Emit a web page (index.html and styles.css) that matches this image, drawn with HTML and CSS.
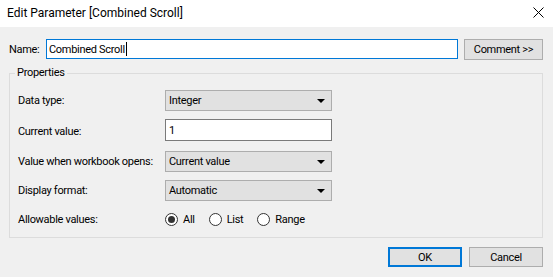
FILE: index.html
```html
<!DOCTYPE html>
<html>
<head>
<meta charset="utf-8">
<link rel="stylesheet" href="styles.css">
</head>
<body>
<div class="window">
  <div class="titlebar">
    <span class="title">Edit Parameter [Combined Scroll]</span>
    <svg class="close" width="11" height="11" viewBox="0 0 11 11"><path d="M0.5 0.5 L10.5 10.5 M10.5 0.5 L0.5 10.5" stroke="#000" stroke-width="1" fill="none"/></svg>
  </div>
  <div class="main">
    <div class="name-row">
      <span class="name-label">Name:</span>
      <div class="textbox focused">Combined Scroll<span class="caret"></span></div>
      <div class="btn comment">Comment &gt;&gt;</div>
    </div>
    <fieldset class="group">
      <legend>Properties</legend>
      <div class="props">
        <span class="lbl">Data type:</span>
        <div class="combo"><span>Integer</span><span class="arrow"></span></div>
        <span class="lbl">Current value:</span>
        <div class="textbox value">1</div>
        <span class="lbl">Value when workbook opens:</span>
        <div class="combo"><span>Current value</span><span class="arrow"></span></div>
        <span class="lbl">Display format:</span>
        <div class="combo"><span>Automatic</span><span class="arrow"></span></div>
        <span class="lbl">Allowable values:</span>
        <div class="radios">
          <label class="radio"><span class="dot checked"></span>All</label>
          <label class="radio"><span class="dot"></span>List</label>
          <label class="radio"><span class="dot"></span>Range</label>
        </div>
      </div>
    </fieldset>
    <div class="buttons">
      <div class="btn default">OK</div>
      <div class="btn">Cancel</div>
    </div>
  </div>
</div>
</body>
</html>
```
FILE: styles.css
```css
* { box-sizing: border-box; }
html, body { margin: 0; padding: 0; }
body {
  width: 553px;
  height: 277px;
  overflow: hidden;
  background: #f0f0f0;
  font-family: Roboto, "Liberation Sans", sans-serif;
  font-size: 11px;
  letter-spacing: -0.3px;
  color: #000;
}
.titlebar {
  height: 27px;
  background: #fff;
  display: flex;
  align-items: center;
  justify-content: space-between;
  padding: 0 9px 2px 7px;
}
.title { font-size: 12px; letter-spacing: 0; }
.close { display: block; }
.main {
  padding: 12px 10px 0 9px;
}
.name-row {
  display: flex;
  align-items: center;
  height: 21px;
}
.name-label { width: 37px; white-space: nowrap; }
.textbox {
  background: #fff;
  border: 1px solid #7a7a7a;
  height: 20px;
  display: flex;
  align-items: center;
  padding-left: 2px;
}
.textbox.focused {
  width: 412px;
  border-color: #0078d7;
  align-self: flex-start;
}
.caret {
  display: inline-block;
  width: 1px;
  height: 14px;
  background: #000;
  margin-left: 1px;
}
.btn {
  background: #e1e1e1;
  border: 1px solid #adadad;
  display: flex;
  align-items: center;
  justify-content: center;
  height: 20px;
  width: 74px;
  white-space: nowrap;
}
.btn.comment {
  margin-left: 6px;
  width: 79px;
  height: 21px;
}
.btn.default {
  border: 2px solid #0078d7;
}
.group {
  margin: 5px 0 0 0;
  padding: 0 0 7px 0;
  border: 1px solid #dcdcdc;
  min-width: 0;
}
.group legend {
  margin-left: 5px;
  padding: 0 2px;
  line-height: 16px;
}
.props {
  display: grid;
  grid-template-columns: 147px 167px;
  grid-template-rows: 21px 24px 21px 21px 21px;
  row-gap: 8px;
  margin-left: 8px;
  padding-top: 9px;
  align-items: center;
}
.lbl { align-self: center; white-space: nowrap; }
.combo {
  height: 21px;
  background: #e1e1e1;
  border: 1px solid #adadad;
  display: flex;
  align-items: center;
  justify-content: space-between;
  padding: 0 6px 0 3px;
}
.arrow {
  width: 0;
  height: 0;
  border-left: 4px solid transparent;
  border-right: 4px solid transparent;
  border-top: 4px solid #000;
}
.textbox.value {
  height: 22px;
  align-self: start;
  padding-left: 3px;
}
.radios {
  display: flex;
  align-items: center;
  gap: 14px;
}
.radio {
  display: flex;
  align-items: center;
  gap: 5px;
}
.dot {
  width: 13px;
  height: 13px;
  border-radius: 50%;
  border: 1px solid #333;
  background: #fff;
  display: flex;
  align-items: center;
  justify-content: center;
}
.dot.checked::after {
  content: "";
  width: 7px;
  height: 7px;
  border-radius: 50%;
  background: #333;
}
.buttons {
  display: flex;
  justify-content: flex-end;
  gap: 7px;
  margin-top: 9px;
}
```
